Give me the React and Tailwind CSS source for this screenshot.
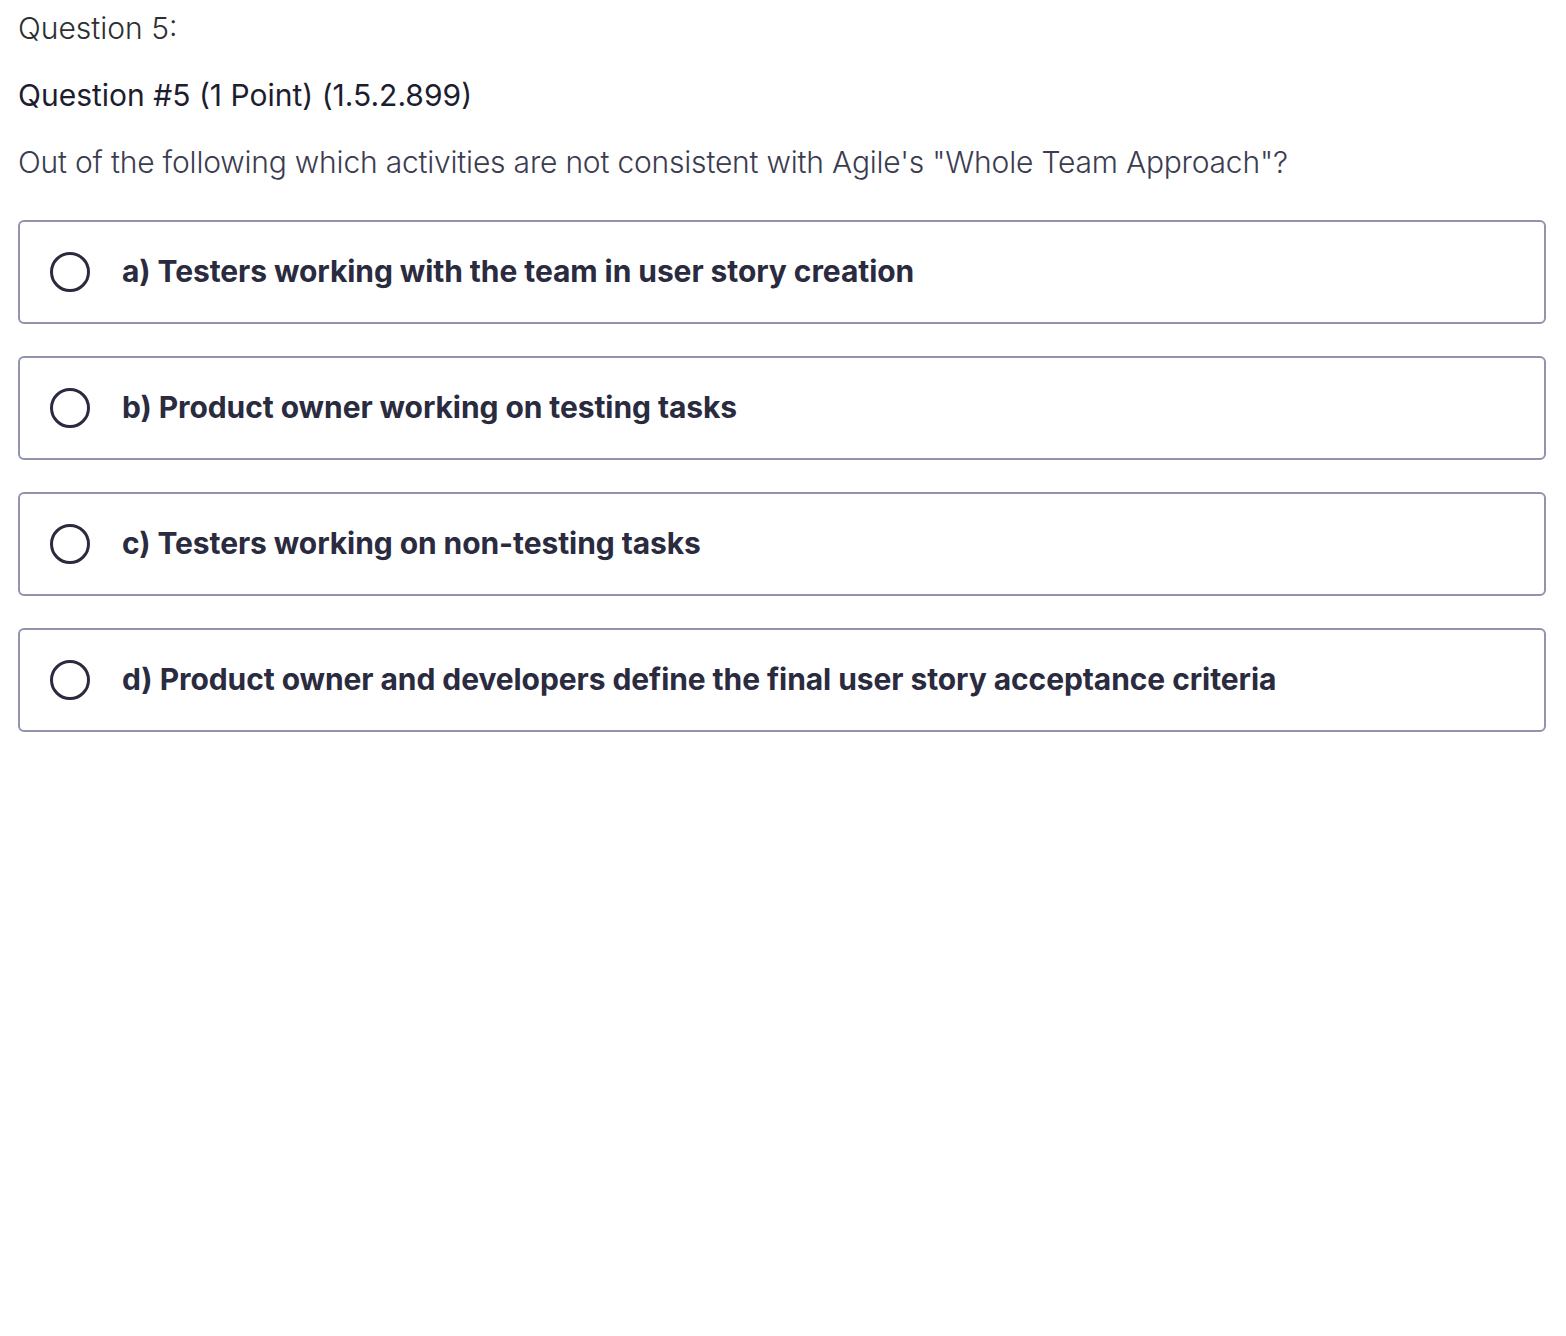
const options = [
  "a) Testers working with the team in user story creation",
  "b) Product owner working on testing tasks",
  "c) Testers working on non-testing tasks",
  "d) Product owner and developers define the final user story acceptance criteria",
];

export default function App() {
  return (
    <div className="min-h-screen bg-white pl-[18px] pr-[20px] pt-[8px] font-['Inter',sans-serif]">
      <p className="text-[30px] leading-[40px] text-[#2d2f31] font-light">Question 5:</p>

      <p className="mt-[27px] text-[30px] leading-[40px] text-[#1c1d2f]">
        Question #5 (1 Point) (1.5.2.899)
      </p>

      <p className="mt-[27px] text-[30px] leading-[40px] tracking-[-0.2px] text-[#3b3c50] font-light">
        Out of the following which activities are not consistent with Agile's "Whole Team Approach"?
      </p>

      <ul className="mt-[38px] flex flex-col gap-[32px]">
        {options.map((opt) => (
          <li
            key={opt}
            className="flex items-center h-[104px] border-2 border-[#9194ac] rounded-[6px] pl-[30px] pr-6"
          >
            <span className="w-[40px] h-[40px] rounded-full border-[3.5px] border-[#2a2b3f] shrink-0" />
            <span className="ml-[32px] -mt-[2px] text-[30px] font-bold tracking-[-0.08px] text-[#2a2b3f]">
              {opt}
            </span>
          </li>
        ))}
      </ul>
    </div>
  );
}
